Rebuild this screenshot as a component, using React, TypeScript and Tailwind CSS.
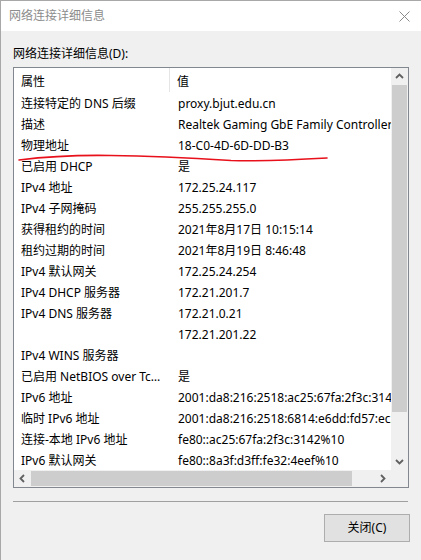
import React from "react";

const rows: [string, string][] = [
  ["连接特定的 DNS 后缀", "proxy.bjut.edu.cn"],
  ["描述", "Realtek Gaming GbE Family Controller"],
  ["物理地址", "18-C0-4D-6D-DD-B3"],
  ["已启用 DHCP", "是"],
  ["IPv4 地址", "172.25.24.117"],
  ["IPv4 子网掩码", "255.255.255.0"],
  ["获得租约的时间", "2021年8月17日 10:15:14"],
  ["租约过期的时间", "2021年8月19日 8:46:48"],
  ["IPv4 默认网关", "172.25.24.254"],
  ["IPv4 DHCP 服务器", "172.21.201.7"],
  ["IPv4 DNS 服务器", "172.21.0.21"],
  ["", "172.21.201.22"],
  ["IPv4 WINS 服务器", ""],
  ["已启用 NetBIOS over Tcpip", "是"],
  ["IPv6 地址", "2001:da8:216:2518:ac25:67fa:2f3c:3142"],
  ["临时 IPv6 地址", "2001:da8:216:2518:6814:e6dd:fd57:ec21"],
  ["连接-本地 IPv6 地址", "fe80::ac25:67fa:2f3c:3142%10"],
  ["IPv6 默认网关", "fe80::8a3f:d3ff:fe32:4eef%10"],
];

const Arrow = ({ rotate }: { rotate: string }) => (
  <svg width="9" height="9" viewBox="0 0 9 9" className={rotate}>
    <path d="M1 6 L4.5 2.5 L8 6" fill="none" stroke="#606060" strokeWidth="1.8" />
  </svg>
);

export default function App() {
  return (
    <div
      className="relative w-[421px] h-[560px] bg-[#f0f0f0] border-l border-[#a8a8a8] flex flex-col text-[12px] text-black"
      style={{ fontFamily: '"Noto Sans", "Noto Sans CJK SC", sans-serif' }}
    >
      {/* title bar */}
      <div className="h-[31px] bg-white border-t border-[#a8a8a8] flex items-center justify-between pl-[8px] pr-[11px]">
        <span className="text-[#8c8c8c] text-[12px]">网络连接详细信息</span>
        <svg width="11" height="11" viewBox="0 0 11 11">
          <path d="M0.5 0.5 L10.5 10.5 M10.5 0.5 L0.5 10.5" stroke="#8a8a8a" strokeWidth="1" />
        </svg>
      </div>

      <div className="pl-[12px] flex flex-col">
        <div className="mt-[15px] h-[16px] leading-[16px]">网络连接详细信息(D):</div>

        {/* list box */}
        <div className="mt-[5px] w-[396px] h-[421px] border border-[#828790] bg-white flex flex-col">
          <div className="flex h-[402px]">
            <div className="w-[377px] overflow-hidden flex flex-col">
              <div className="h-[24px] flex shrink-0">
                <div className="w-[156px] pl-[7px] pt-[4px] border-r border-[#e5e5e5] h-full flex items-center">属性</div>
                <div className="pl-[7px] pt-[4px] flex items-center">值</div>
              </div>
              {rows.map(([k, v], i) => (
                <div key={i} className="h-[21px] pt-[2px] flex items-center shrink-0">
                  <div className="w-[157px] pl-[7px] pr-[5px] truncate shrink-0">{k}</div>
                  <div className="pl-[7px] whitespace-nowrap">{v}</div>
                </div>
              ))}
            </div>
            {/* vertical scrollbar */}
            <div className="w-[17px] bg-[#f0f0f0] flex flex-col">
              <div className="h-[17px] flex items-center justify-center">
                <Arrow rotate="" />
              </div>
              <div className="h-[327px] mx-[1px] bg-[#cdcdcd]" />
              <div className="flex-1" />
              <div className="h-[17px] flex items-center justify-center">
                <Arrow rotate="rotate-180" />
              </div>
            </div>
          </div>
          {/* horizontal scrollbar */}
          <div className="flex h-[17px]">
            <div className="w-[377px] bg-[#f0f0f0] flex">
              <div className="w-[17px] flex items-center justify-center">
                <Arrow rotate="-rotate-90" />
              </div>
              <div className="w-[321px] my-[1px] bg-[#cdcdcd]" />
              <div className="flex-1" />
              <div className="w-[17px] flex items-center justify-center">
                <Arrow rotate="rotate-90" />
              </div>
            </div>
            <div className="w-[17px] bg-[#f0f0f0]" />
          </div>
        </div>

        <div className="mt-[13px] w-[395px] h-[1px] bg-[#a0a0a0]" />

        <div className="mt-[12px] flex justify-end pr-[11px]">
          <button className="w-[86px] h-[28px] bg-[#e1e1e1] border border-[#adadad] text-[12px]">
            关闭(C)
          </button>
        </div>
      </div>

      {/* red annotation stroke */}
      <svg
        className="absolute left-0 top-0 pointer-events-none"
        width="421"
        height="560"
        viewBox="0 0 421 560"
      >
        <path
          d="M18 160 C 50 156, 80 155, 110 155.5 C 150 156, 190 158, 230 160.5 C 260 161.5, 300 159.5, 326 158"
          fill="none"
          stroke="#e8101a"
          strokeWidth="1.6"
          strokeLinecap="round"
        />
      </svg>
    </div>
  );
}
